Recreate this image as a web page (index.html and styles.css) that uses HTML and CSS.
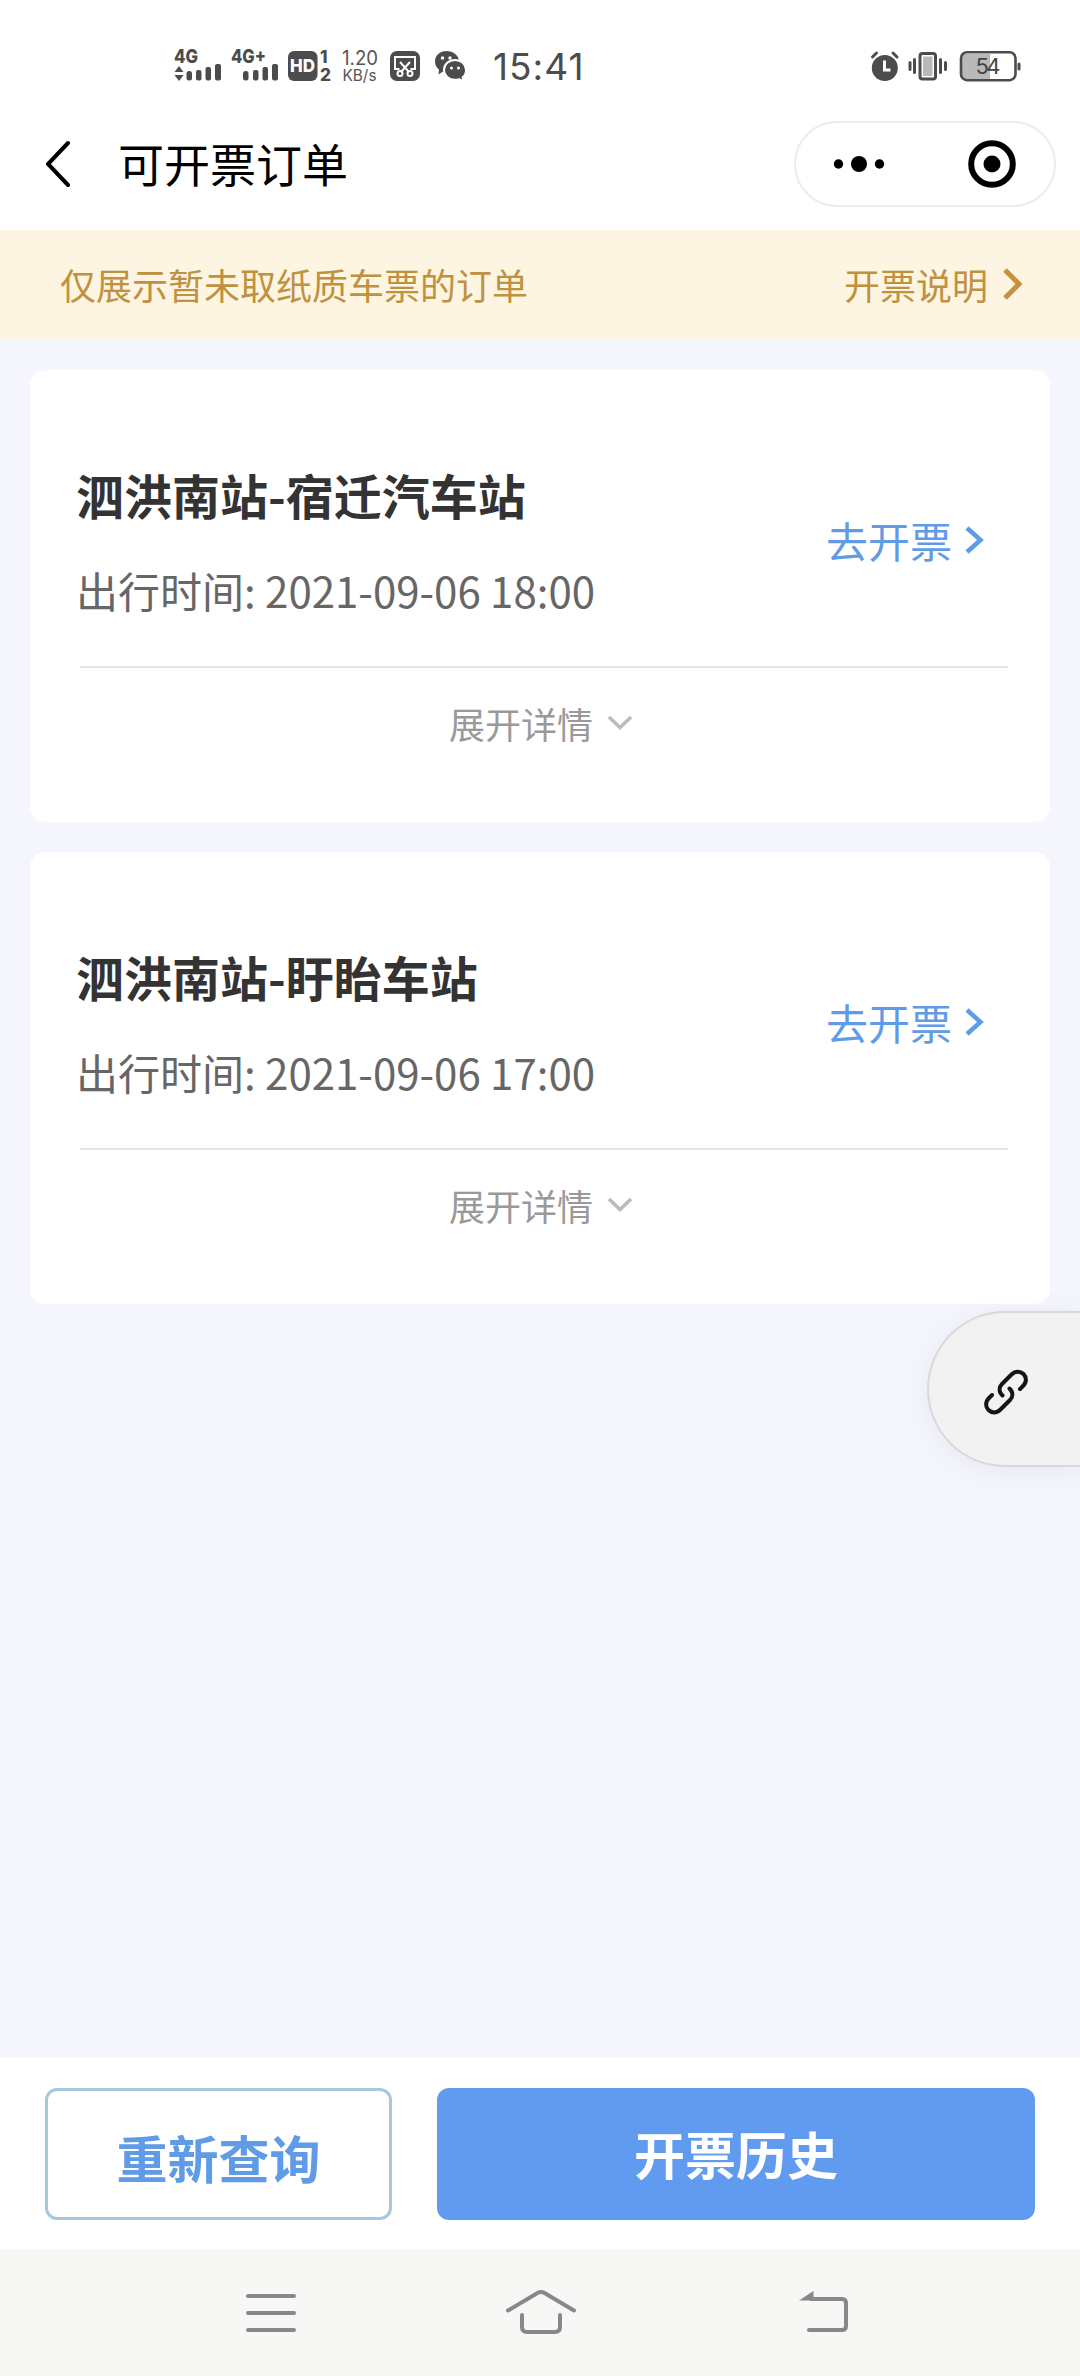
FILE: index.html
```html
<!DOCTYPE html>
<html lang="zh-CN">
<head>
<meta charset="utf-8">
<title>可开票订单</title>
<link rel="stylesheet" href="styles.css">
</head>
<body>
<div class="screen">
  <div class="status">
    <svg class="status-left" width="310" height="44" viewBox="0 0 310 44">
      <g class="sig">
        <text x="0" y="21" textLength="24" lengthAdjust="spacingAndGlyphs">4G</text>
        <path d="M5 24l4.500 6h-9zM5 39l4.500-6h-9z"/>
        <rect x="12.500" y="29" width="5.500" height="9.500" rx="2.500"/>
        <rect x="22" y="28" width="5.500" height="10.500" rx="2"/>
        <rect x="31.500" y="25" width="5.500" height="13.500" rx="2"/>
        <rect x="41" y="22" width="6" height="16.500" rx="2"/>
        <text x="57" y="21" textLength="35" lengthAdjust="spacingAndGlyphs">4G+</text>
        <rect x="69" y="29" width="5.500" height="9.500" rx="2.500"/>
        <rect x="79" y="28" width="5.500" height="10.500" rx="2"/>
        <rect x="88.500" y="25" width="5.500" height="13.500" rx="2"/>
        <rect x="98" y="22" width="6" height="16.500" rx="2"/>
        <rect x="114" y="9" width="29.500" height="30" rx="6"/>
        <text class="hd" x="116" y="30" textLength="25" lengthAdjust="spacingAndGlyphs">HD</text>
        <text class="sim" x="146" y="21">1</text>
        <text class="sim" x="146" y="38.500" textLength="11" lengthAdjust="spacingAndGlyphs">2</text>
      </g>
      <g>
        <text class="rate" x="168" y="22.500" textLength="36" lengthAdjust="spacingAndGlyphs">1.20</text>
        <text class="rate unit" x="168.500" y="38.500" textLength="34" lengthAdjust="spacingAndGlyphs">KB/s</text>
      </g>
      <g>
        <rect class="ink" x="216" y="9" width="30" height="30" rx="7"/>
        <path class="line-white" d="M225.500 27H221V15h20v12h-4.500M226 20l9 10M236 20l-9 10"/>
        <circle class="line-white" cx="226" cy="31.500" r="2.500"/>
        <circle class="line-white" cx="236" cy="31.500" r="2.500"/>
      </g>
      <g>
        <path class="ink" d="M272.500 9c-6.500 0-11.500 4.500-11.500 10.500 0 3.500 1.500 6 4 8l-.5 5 4.500-3c8 2 16-3 16-10 0-6-6-10.500-12.500-10.500z"/>
        <path class="bubble" d="M281 18c-6 0-11 4.300-11 10s5 9.800 11 9.800c1.500 0 2.900-.2 4.200-.7l4.300 2.600-.8-4.300c2.200-1.700 3.300-4.300 3.300-7.400 0-5.700-5-10-11-10z"/>
        <g class="eyes"><circle cx="268.500" cy="16" r="1.700"/><circle cx="276" cy="16" r="1.700"/><circle cx="277.500" cy="26" r="1.500"/><circle cx="284.500" cy="26" r="1.500"/></g>
      </g>
    </svg>
    <span class="clock">15:41</span>
    <svg class="status-right" width="160" height="44" viewBox="0 0 160 44">
      <circle class="ink" cx="14.800" cy="26" r="13"/>
      <path class="line-ink" d="M2.500 15l4-4M27 15l-4-4"/>
      <path class="hand" d="M14.500 18.500V28h6"/>
      <path class="line-ink" d="M40 20.500v7M44.500 17.500v13M70.500 17.500v13M75.500 20.500v7"/>
      <rect class="line-ink" x="50" y="11.500" width="15.500" height="25.500" rx="2.500"/>
      <rect class="charge" x="53" y="14.500" width="9.500" height="19.500"/>
      <rect class="charge" x="92" y="12" width="28" height="25"/>
      <rect class="battery" x="91" y="10.200" width="54.500" height="28" rx="6"/>
      <path class="line-ink" d="M149 22v5"/>
      <text class="level" x="105.500" y="32" textLength="25">54</text>
    </svg>
  </div>

  <header class="header">
    <svg class="back" width="24" height="48" viewBox="0 0 24 48"><path d="M22 3L2 24l20 21"/></svg>
    <h1 class="page-title">可开票订单</h1>
    <div class="capsule">
      <svg class="capsule-half" width="129" height="82" viewBox="0 0 129 82"><circle cx="42.500" cy="41" r="4.700"/><circle cx="63" cy="41" r="8"/><circle cx="83.500" cy="41" r="4.700"/></svg>
      <span class="capsule-rule"></span>
      <svg class="capsule-half" width="129" height="82" viewBox="0 0 129 82"><circle class="ring" cx="67" cy="41" r="20.800"/><circle cx="67" cy="41" r="8.500"/></svg>
    </div>
  </header>

  <div class="notice">
    <span>仅展示暂未取纸质车票的订单</span>
    <a class="notice-link">开票说明<svg width="22" height="34" viewBox="0 0 22 34"><path d="M3 3l14 14L3 31"/></svg></a>
  </div>

  <main class="orders">
    <section class="card">
      <div class="card-main">
        <div>
          <h2 class="route">泗洪南站-宿迁汽车站</h2>
          <p class="time">出行时间: 2021-09-06 18:00</p>
        </div>
        <a class="go">去开票<svg width="22" height="30" viewBox="0 0 22 30"><path d="M3 3l13.500 12L3 27"/></svg></a>
      </div>
      <div class="more">展开详情<svg width="28" height="18" viewBox="0 0 28 18"><path d="M3 3l11 10.500L25 3"/></svg></div>
    </section>
    <section class="card">
      <div class="card-main">
        <div>
          <h2 class="route">泗洪南站-盱眙车站</h2>
          <p class="time">出行时间: 2021-09-06 17:00</p>
        </div>
        <a class="go">去开票<svg width="22" height="30" viewBox="0 0 22 30"><path d="M3 3l13.500 12L3 27"/></svg></a>
      </div>
      <div class="more">展开详情<svg width="28" height="18" viewBox="0 0 28 18"><path d="M3 3l11 10.500L25 3"/></svg></div>
    </section>
  </main>

  <div class="float-tab">
    <svg width="50" height="50" viewBox="0 0 50 50"><path d="M21.500 28.500c-4-4-3.500-8.500-.5-11.500l9.500-9.500c4-4 9-3.500 12-.5s3.500 8-.5 12l-3 3M28.500 21.500c4 4 3.500 8.500.5 11.500l-9.500 9.500c-4 4-9 3.500-12 .5s-3.500-8 .5-12l3-3"/></svg>
  </div>

  <footer class="actions">
    <button class="btn btn-outline">重新查询</button>
    <button class="btn btn-solid">开票历史</button>
  </footer>

  <nav class="sysnav">
    <svg width="54" height="44" viewBox="0 0 54 44"><path d="M4 5h46M4 22h46M4 39h46"/></svg>
    <svg class="home" width="74" height="48" viewBox="0 0 74 48"><path d="M4 24.500L33.500 7q3.500-2 7 0L70 24.500M18 29v12q0 5 5 5h28q5 0 5-5V29"/></svg>
    <svg class="return" width="54" height="48" viewBox="0 0 54 48"><path d="M13 13h31q4 0 4 4v23q0 4-4 4H11"/><path class="tip" d="M1 14.500L15.500 5v9.500z"/></svg>
  </nav>
</div>
</body>
</html>
```

FILE: styles.css
```css
* { box-sizing: border-box; }

body {
  margin: 0;
  font-family: "Noto Sans CJK SC", sans-serif;
  background: #fff;
}

h1, h2, p { margin: 0; }
svg { display: block; flex: none; }

.screen {
  position: relative;
  width: 1080px;
  height: 2376px;
  display: flex;
  flex-direction: column;
  overflow: hidden;
  background: #f5f6fd;
}

/* Status bar */
.status {
  height: 100px;
  padding: 42px 50px 0 174px;
  display: flex;
  align-items: flex-start;
  background: #fff;
  font-family: Inter, sans-serif;
}
.status-left { margin-right: 9px; }
.status-right { margin-left: auto; }
.ink, .sig { fill: #4c4c4c; }
.sig text { font-size: 19px; font-weight: 800; }
.sig .hd { font-size: 18px; fill: #fff; }
.sig .sim { font-size: 17px; }
.rate { font-size: 20px; fill: #555; }
.unit { font-size: 16px; }
.line-white { fill: none; stroke: #fff; stroke-width: 2; }
.bubble { fill: #4c4c4c; stroke: #fff; stroke-width: 2; }
.eyes { fill: #fff; }
.hand { fill: none; stroke: #fff; stroke-width: 3; }
.line-ink { fill: none; stroke: #4c4c4c; stroke-width: 3; stroke-linecap: round; }
.charge { fill: #b9b9b9; }
.battery { fill: none; stroke: #4c4c4c; stroke-width: 2.6; }
.level { font-size: 22px; fill: #444; }
.clock {
  margin-top: 3px;
  font-size: 37px;
  line-height: 44px;
  letter-spacing: 1px;
  color: #4c4c4c;
}

/* Page header */
.header {
  height: 130px;
  padding: 0 24px 2px 46px;
  display: flex;
  align-items: center;
  background: #fff;
}
.back path { fill: none; stroke: #000; stroke-width: 4; stroke-linecap: round; }
.page-title {
  margin-left: 48px;
  padding-bottom: 4px;
  font-size: 46px;
  line-height: 66px;
  font-weight: 400;
  color: #000;
}
.capsule {
  width: 262px;
  height: 86px;
  margin-left: auto;
  display: flex;
  align-items: center;
  border: 2px solid #ececec;
  border-radius: 43px;
}
.capsule-rule { width: 1px; height: 56px; background: #dedede; }
.ring { fill: none; stroke: #000; stroke-width: 6; }

/* Notice strip */
.notice {
  height: 110px;
  padding: 0 56px 2px 60px;
  display: flex;
  align-items: center;
  justify-content: space-between;
  background: #fdf5e2;
  font-size: 36px;
  color: #c0913f;
}
.notice-link { display: flex; align-items: center; gap: 14px; }
.notice-link path { fill: none; stroke: #c88f3f; stroke-width: 5; }

/* Order cards */
.orders {
  flex: 1;
  padding: 30px;
  display: flex;
  flex-direction: column;
  gap: 30px;
}
.card {
  height: 452px;
  padding: 92px 42px 0 46px;
  border-radius: 15px;
  background: #fff;
}
.card-main {
  display: flex;
  align-items: center;
  justify-content: space-between;
}
.route { font-size: 48px; line-height: 64px; font-weight: 700; color: #333; }
.time { margin-top: 34px; font-size: 42px; line-height: 60px; color: #666; }
.go {
  margin-right: 22px;
  padding-bottom: 3px;
  display: flex;
  align-items: center;
  gap: 12px;
  font-size: 42px;
  line-height: 60px;
  color: #5f9be6;
}
.go path { fill: none; stroke: #5f9be6; stroke-width: 4.500; }
.more {
  margin: 46px 0 0 4px;
  padding: 30px 5px 0 0;
  display: flex;
  align-items: center;
  justify-content: center;
  gap: 13px;
  border-top: 2px solid #e6e6e6;
  font-size: 36px;
  line-height: 50px;
  color: #999;
}
.more path { fill: none; stroke: #bbb; stroke-width: 3.500; }

/* Tab docked over the right edge */
.float-tab {
  position: absolute;
  top: 1311px;
  right: 0;
  width: 153px;
  height: 156px;
  padding: 5px 0 0 52px;
  display: flex;
  align-items: center;
  border: 2px solid #d9d9dc;
  border-right: 0;
  border-radius: 78px 0 0 78px;
  background: #f2f2f3;
  box-shadow: 0 4px 24px rgba(60, 60, 80, 0.08);
}
.float-tab path { fill: none; stroke: #151515; stroke-width: 4; stroke-linecap: round; }

/* Bottom actions */
.actions {
  height: 191px;
  padding: 30px 45px 0;
  display: flex;
  gap: 45px;
  background: #fff;
}
.btn {
  height: 132px;
  padding: 0;
  border: 0;
  border-radius: 12px;
  font-family: inherit;
  font-size: 51px;
  font-weight: 700;
}
.btn-outline {
  width: 347px;
  padding-top: 5px;
  border: 3px solid #a6c8de;
  background: #fff;
  color: #609be8;
}
.btn-solid { flex: 1; background: #619bf0; color: #fff; padding-bottom: 2px; }

/* System navigation */
.sysnav {
  height: 127px;
  padding: 0 228px 0 244px;
  display: flex;
  justify-content: space-between;
  align-items: center;
  background: #f7f7f6;
}
.sysnav path { fill: none; stroke: #888; stroke-width: 4; stroke-linecap: round; }
.sysnav .tip { fill: #888; stroke: none; }
.home { margin: 0 14px 5px 0; }
.return { margin-bottom: 5px; }
```
